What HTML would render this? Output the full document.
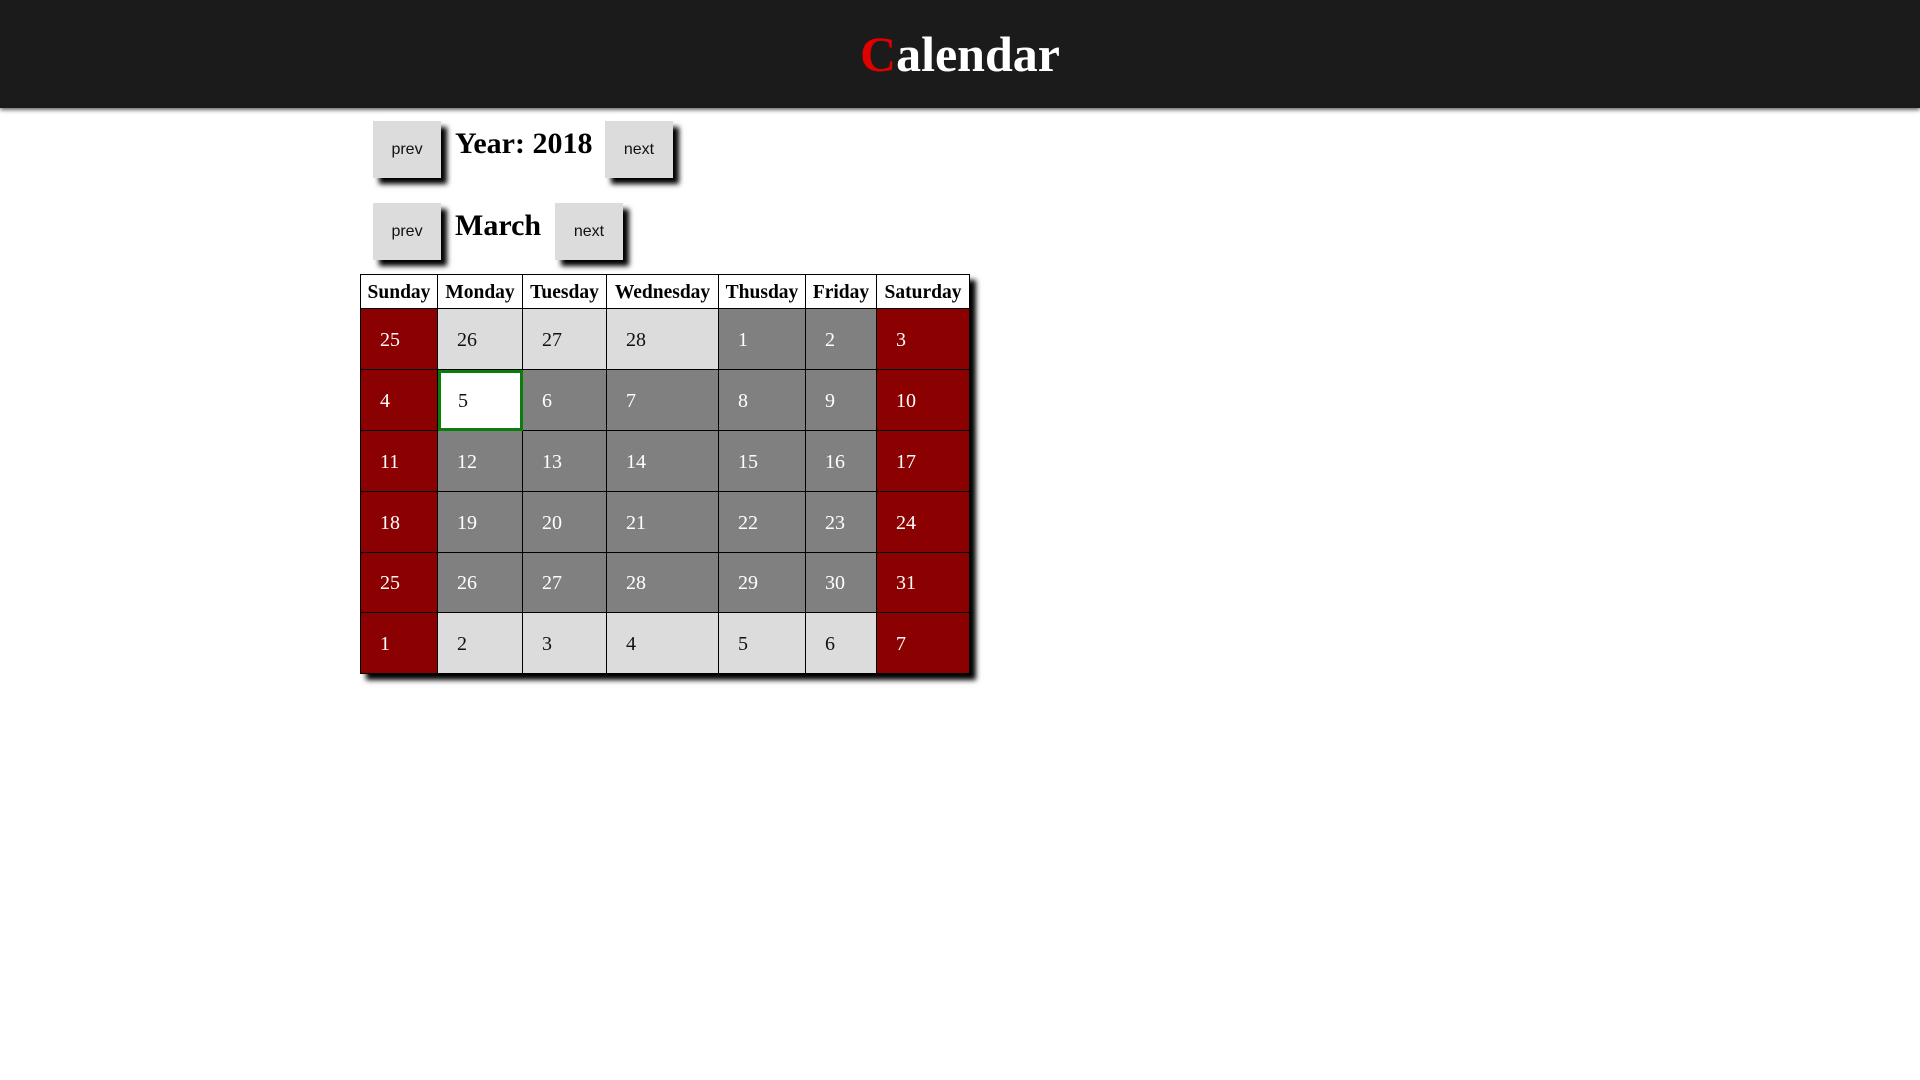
<!DOCTYPE html>
<html><head><meta charset="utf-8"><style>
body{margin:0;width:1920px;height:1080px;background:#fff;position:relative;overflow:hidden;font-family:"Liberation Serif",serif;}
.top{position:absolute;left:0;top:0;width:1920px;height:108px;background:#1b1b1b;box-shadow:0 2px 4px rgba(0,0,0,.6);}
.top h1{margin:0;position:absolute;left:0;width:1920px;top:24px;text-align:center;font-size:50px;line-height:60px;color:#fff;font-weight:bold;}
.top h1 span{color:#e00000;}
.btn{position:absolute;width:68px;height:57px;background:#dcdcdc;box-shadow:6px 6px 5px #000;font-family:"Liberation Sans",sans-serif;font-size:16px;line-height:57px;text-align:center;color:#111;}
.t{position:absolute;font-weight:bold;font-size:30px;line-height:34px;color:#000;}
.c{position:absolute;box-sizing:border-box;border-right:1px solid #000;border-bottom:1px solid #000;font-size:20px;padding-left:19px;padding-top:2px;display:flex;align-items:center;color:#fff;}
.h{background:#fff;color:#000;font-weight:bold;justify-content:center;padding:2px 0 0 0;font-size:19.5px;}
.r{background:#8b0000;}.g{background:#808080;}.l{background:#dcdcdc;color:#111;}
.w{background:#fff;color:#111;border:3px solid #0a7d0a;padding-left:17px;}
.tbl{position:absolute;left:360px;top:274px;width:610px;height:400px;box-sizing:border-box;border:1px solid #000;box-shadow:6px 6px 5px #000;}
</style></head><body>
<div class="top"><h1><span>C</span>alendar</h1></div>
<div class="btn" style="left:373px;top:121px">prev</div>
<div class="t" style="left:455px;top:127px">Year: 2018</div>
<div class="btn" style="left:605px;top:121px">next</div>
<div class="btn" style="left:373px;top:203px">prev</div>
<div class="t" style="left:455px;top:209px">March</div>
<div class="btn" style="left:555px;top:203px">next</div>
<div class="tbl"></div>
<div id="g"></div>
<script>
var xs=[360,438,523,607,719,806,877,970];
var ys=[274,309,370,431,492,553,613,674];
var hd=["Sunday","Monday","Tuesday","Wednesday","Thusday","Friday","Saturday"];
var d=[[25,26,27,28,1,2,3],[4,5,6,7,8,9,10],[11,12,13,14,15,16,17],[18,19,20,21,22,23,24],[25,26,27,28,29,30,31],[1,2,3,4,5,6,7]];
var h="";
function cell(cls,x,y,w,hh,t,extra){h+='<div class="c '+cls+'" style="left:'+x+'px;top:'+y+'px;width:'+w+'px;height:'+hh+'px;'+(extra||'')+'">'+t+'</div>';}
for(var i=0;i<7;i++){cell("h",xs[i],ys[0],xs[i+1]-xs[i],ys[1]-ys[0],hd[i],i==0?"border-left:1px solid #000;border-top:1px solid #000":"border-top:1px solid #000");}
for(var r=0;r<6;r++)for(var i=0;i<7;i++){
 var cls;
 if(i==0||i==6)cls="r";
 else if((r==0&&i<4)||r==5)cls="l";
 else if(r==1&&i==1)cls="w";
 else cls="g";
 cell(cls,xs[i],ys[r+1],xs[i+1]-xs[i],ys[r+2]-ys[r+1],d[r][i],i==0?"border-left:1px solid #000":"");
}
document.getElementById("g").innerHTML=h;
</script>
</body></html>
